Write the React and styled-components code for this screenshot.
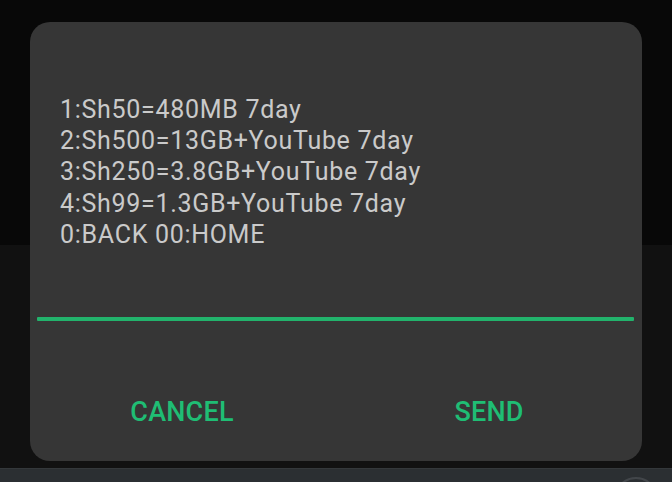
import React from 'react';
import styled, { createGlobalStyle } from 'styled-components';

const GlobalStyle = createGlobalStyle`
    html, body {
        margin: 0;
        padding: 0;
        background: #080808;
    }
    body {
        font-family: Roboto, "Noto Sans", "Liberation Sans", sans-serif;
    }
`;

const Screen = styled.div`
    width: 672px;
    height: 482px;
    overflow: hidden;
    display: flex;
    flex-direction: column;
    background: linear-gradient(#080808 0 245px, #111111 245px 100%);
`;

const Stage = styled.div`
    flex-shrink: 0;
    padding: 22px 30px 0 30px;
    height: 461px;
    box-sizing: border-box;
`;

const Dialog = styled.div`
    width: 612px;
    height: 439px;
    border-radius: 20px;
    background-color: #363636;
    display: flex;
    flex-direction: column;
`;

const Message = styled.div`
    padding: 72px 30px 0 30px;
    color: #cacaca;
    font-size: 25px;
    line-height: 31.2px;
    letter-spacing: 0.7px;
`;

const Line = styled.div`
    white-space: pre;
`;

const Field = styled.div`
    margin: 67px 8px 0 7px;
    height: 4px;
    border-radius: 1px;
    background-color: #22b36c;
`;

const Actions = styled.div`
    display: grid;
    grid-template-columns: 1fr 1fr;
    margin-top: 74px;
`;

const ActionButton = styled.button`
    border: 0;
    background: transparent;
    padding: 0;
    font-family: Roboto, "Noto Sans", "Liberation Sans", sans-serif;
    font-weight: 500;
    font-size: 27px;
    letter-spacing: 0.2px;
    line-height: 34px;
    color: #1fbd74;
    text-align: center;
    margin-left: ${({ offset }) => offset || 0}px;
`;

const NavBar = styled.div`
    margin-top: 7px;
    flex: 1;
    min-height: 0;
    overflow: hidden;
    background-color: #2b2f32;
    border-top: 1px solid #34383b;
    display: flex;
    justify-content: flex-end;
    padding-right: 14px;
`;

const NavButton = styled.div`
    flex-shrink: 0;
    width: 40px;
    height: 40px;
    margin-top: 8px;
    border-radius: 50%;
    border: 2px solid #5a5e61;
    opacity: 0.5;
`;

const lines = [
    '1:Sh50=480MB 7day',
    '2:Sh500=13GB+YouTube 7day',
    '3:Sh250=3.8GB+YouTube 7day',
    '4:Sh99=1.3GB+YouTube 7day',
    '0:BACK 00:HOME',
];

export default function App() {
    return (
        <>
            <GlobalStyle />
            <Screen>
                <Stage>
                    <Dialog>
                        <Message>
                            {lines.map(text => (
                                <Line key={text}>{text}</Line>
                            ))}
                        </Message>
                        <Field />
                        <Actions>
                            <ActionButton offset={-2}>CANCEL</ActionButton>
                            <ActionButton offset={0}>SEND</ActionButton>
                        </Actions>
                    </Dialog>
                </Stage>
                <NavBar>
                    <NavButton />
                </NavBar>
            </Screen>
        </>
    );
}
